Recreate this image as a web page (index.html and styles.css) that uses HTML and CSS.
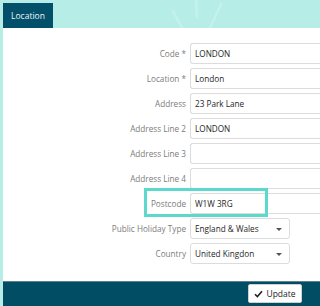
FILE: index.html
```html
<!DOCTYPE html>
<html>
<head>
<meta charset="utf-8">
<link rel="stylesheet" href="styles.css">
</head>
<body>
<div class="page">
  <div class="header">
    <svg class="rays" width="80" height="28" viewBox="0 0 80 28">
      <g stroke="#c4f1ec" stroke-width="2.5" stroke-linecap="round" fill="none">
        <line x1="13" y1="11" x2="22" y2="28"/>
        <line x1="36" y1="0" x2="37" y2="17"/>
        <line x1="61" y1="4" x2="50" y2="28"/>
      </g>
    </svg>
    <div class="tab">Location</div>
  </div>
  <div class="panel">
    <div class="form">
      <label class="lbl">Code *</label><div class="inp">LONDON</div>
      <label class="lbl">Location *</label><div class="inp">London</div>
      <label class="lbl">Address</label><div class="inp">23 Park Lane</div>
      <label class="lbl">Address Line 2</label><div class="inp">LONDON</div>
      <label class="lbl">Address Line 3</label><div class="inp"></div>
      <label class="lbl">Address Line 4</label><div class="inp"></div>
      <label class="lbl">Postcode</label><div class="inp">W1W 3RG</div>
      <label class="lbl">Public Holiday Type</label><div class="inp sel">England &amp; Wales<span class="arrow"></span></div>
      <label class="lbl">Country</label><div class="inp sel">United Kingdon<span class="arrow"></span></div>
    </div>
    <div class="highlight"></div>
  </div>
  <div class="footer">
    <button class="btn"><svg width="9" height="8" viewBox="0 0 9 8"><path d="M1 4.2 L3.4 6.6 L8 1.2" stroke="#222" stroke-width="1.6" fill="none"/></svg>Update</button>
  </div>
</div>
</body>
</html>
```
FILE: styles.css
```css
* { box-sizing: border-box; }
html, body { margin: 0; padding: 0; }
body {
  width: 320px;
  height: 306px;
  overflow: hidden;
  background: #b6ede6;
  font-family: "Open Sans", "Noto Sans", sans-serif;
}
.page { width: 320px; height: 306px; display: flex; flex-direction: column; }
.header {
  position: relative;
  height: 28px;
  padding: 3px 0 0 3px;
  display: flex;
}
.rays { position: absolute; left: 160px; top: 0; }
.tab {
  position: relative;
  width: 50px;
  height: 25px;
  background: #02506a;
  color: #eef6f7;
  font-size: 8.5px;
  display: flex;
  align-items: center;
  justify-content: center;
}
.panel {
  position: relative;
  margin-left: 3px;
  height: 253px;
  background: #fff;
  padding-top: 15px;
}
.form {
  display: grid;
  grid-template-columns: 183px 130px;
  column-gap: 4px;
  row-gap: 4px;
  grid-auto-rows: 21px;
}
.lbl {
  font-size: 8.2px;
  color: #7c7c7c;
  text-align: right;
  align-self: center;
  white-space: nowrap;
}
.inp {
  border: 1px solid #dcdcdc;
  border-right: none;
  border-radius: 3px 0 0 3px;
  font-size: 8.2px;
  color: #262626;
  display: flex;
  align-items: center;
  padding-left: 4px;
}
.sel {
  width: 100px;
  position: relative;
  border-right: 1px solid #dcdcdc;
  border-radius: 3px;
}
.arrow {
  position: absolute;
  right: 7px;
  top: 9px;
  width: 0; height: 0;
  border-left: 3px solid transparent;
  border-right: 3px solid transparent;
  border-top: 3px solid #555;
}
.highlight {
  position: absolute;
  left: 141px;
  top: 160px;
  width: 124px;
  height: 29px;
  border: 3px solid #5cd9cc;
}
.footer {
  margin-left: 3px;
  flex: 1;
  background: #014d64;
  border-top: 1px solid #5f8290;
  display: flex;
  justify-content: flex-end;
  align-items: flex-start;
  padding: 2px 18px 0 0;
}
.btn {
  width: 54px;
  height: 19px;
  background: #fff;
  border: 1px solid #d0d0d0;
  border-radius: 2px;
  font-family: "Open Sans", "Noto Sans", sans-serif;
  font-size: 8.5px;
  color: #222;
  display: flex;
  align-items: center;
  justify-content: center;
  gap: 3px;
  padding: 0;
}
```
